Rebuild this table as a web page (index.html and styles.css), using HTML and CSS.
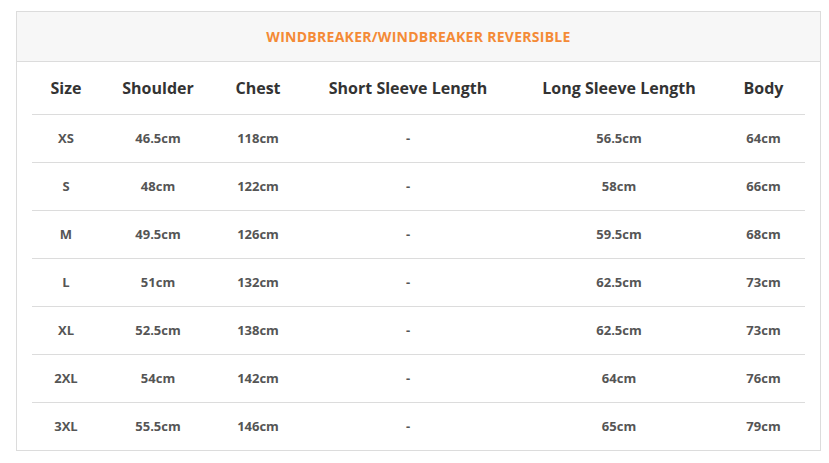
FILE: index.html
```html
<!DOCTYPE html>
<html>
<head>
<meta charset="utf-8">
<link rel="stylesheet" href="styles.css">
</head>
<body>
<div class="chart">
  <div class="chart-title">WINDBREAKER/WINDBREAKER REVERSIBLE</div>
  <div class="chart-body">
    <table class="size-table">
      <colgroup>
        <col class="c1"><col class="c2"><col class="c3"><col class="c4"><col class="c5"><col class="c6">
      </colgroup>
      <thead>
        <tr><th>Size</th><th>Shoulder</th><th>Chest</th><th>Short Sleeve Length</th><th>Long Sleeve Length</th><th>Body</th></tr>
      </thead>
      <tbody>
        <tr><td>XS</td><td>46.5cm</td><td>118cm</td><td>-</td><td>56.5cm</td><td>64cm</td></tr>
        <tr><td>S</td><td>48cm</td><td>122cm</td><td>-</td><td>58cm</td><td>66cm</td></tr>
        <tr><td>M</td><td>49.5cm</td><td>126cm</td><td>-</td><td>59.5cm</td><td>68cm</td></tr>
        <tr><td>L</td><td>51cm</td><td>132cm</td><td>-</td><td>62.5cm</td><td>73cm</td></tr>
        <tr><td>XL</td><td>52.5cm</td><td>138cm</td><td>-</td><td>62.5cm</td><td>73cm</td></tr>
        <tr><td>2XL</td><td>54cm</td><td>142cm</td><td>-</td><td>64cm</td><td>76cm</td></tr>
        <tr><td>3XL</td><td>55.5cm</td><td>146cm</td><td>-</td><td>65cm</td><td>79cm</td></tr>
      </tbody>
    </table>
  </div>
</div>
</body>
</html>
```
FILE: styles.css
```css
html, body { margin: 0; padding: 0; background: #fff; }
body {
  padding: 11px 8px 0 16px;
  font-family: "Open Sans", "Liberation Sans", sans-serif;
}
.chart {
  width: 803px;
  border: 1px solid #dcdcdc;
}
.chart-title {
  height: 49px;
  background: #f7f7f7;
  border-bottom: 1px solid #dcdcdc;
  display: flex;
  align-items: center;
  justify-content: center;
  color: #f48a36;
  font-size: 14px;
  font-weight: 700;
  letter-spacing: 0.27px;
}
.chart-body {
  padding: 0 15px;
}
.size-table {
  width: 773px;
  border-collapse: collapse;
  table-layout: fixed;
  text-align: center;
}
.c1 { width: 68px; }
.c2 { width: 116px; }
.c3 { width: 84px; }
.c4 { width: 216px; }
.c5 { width: 206px; }
.c6 { width: 83px; }
.size-table th {
  height: 52px;
  padding: 0;
  font-size: 16px;
  font-weight: 700;
  color: #333;
  border-bottom: 1px solid #dcdcdc;
}
.size-table td {
  height: 45px;
  padding: 0 0 2px;
  font-size: 13px;
  font-weight: 700;
  color: #555;
  border-bottom: 1px solid #dcdcdc;
}
.size-table tbody tr:last-child td {
  border-bottom: none;
}
```
